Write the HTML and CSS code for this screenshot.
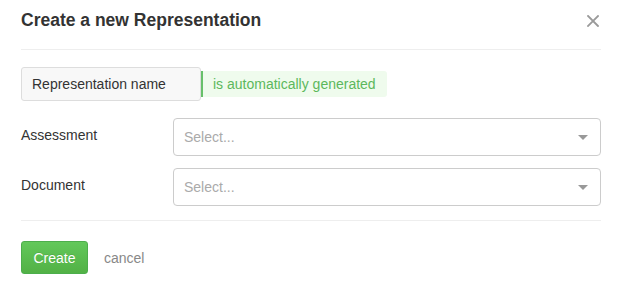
FILE: index.html
```html
<!DOCTYPE html>
<html>
<head>
<meta charset="utf-8">
<link rel="stylesheet" href="styles.css">
</head>
<body>
<div class="modal">
  <div class="modal-header">
    <h3 class="title">Create a new Representation</h3>
    <span class="close"><svg width="12" height="12" viewBox="0 0 12 12"><path d="M1 1 L11 11 M11 1 L1 11" stroke="#9a9a9a" stroke-width="1.8" stroke-linecap="square"/></svg></span>
  </div>
  <div class="modal-body">
    <div class="name-row">
      <div class="name-box">Representation name</div>
      <div class="name-tag">is automatically generated</div>
    </div>
    <div class="field">
      <label class="field-label">Assessment</label>
      <div class="select"><span class="placeholder">Select...</span><span class="arrow"></span></div>
    </div>
    <div class="field field-second">
      <label class="field-label">Document</label>
      <div class="select"><span class="placeholder">Select...</span><span class="arrow"></span></div>
    </div>
  </div>
  <div class="modal-footer">
    <button class="btn-create">Create</button>
    <a class="cancel">cancel</a>
  </div>
</div>
</body>
</html>
```
FILE: styles.css
```css
html, body {
  margin: 0;
  padding: 0;
  background: #fff;
}
body {
  font-family: "Liberation Sans", Arial, sans-serif;
  font-size: 14px;
  color: #333;
}
.modal {
  padding: 0 24px 0 21px;
}
.modal-header {
  height: 49px;
  border-bottom: 1px solid #eeeeee;
  display: flex;
  align-items: flex-start;
  justify-content: space-between;
}
.title {
  margin: 9px 0 0 0;
  font-size: 17.5px;
  line-height: 22px;
  font-weight: bold;
  color: #333;
}
.close {
  margin-top: 15px;
  margin-right: 2px;
  width: 12px;
  height: 12px;
  display: block;
}
.close svg { display: block; }
.modal-body {
  padding-top: 17px;
  padding-bottom: 14px;
  border-bottom: 1px solid #eeeeee;
}
.name-row {
  display: flex;
  align-items: center;
  margin-bottom: 17px;
}
.name-box {
  box-sizing: border-box;
  width: 180px;
  height: 34px;
  border: 1px solid #dddddd;
  border-radius: 3px;
  background: #f8f8f8;
  padding-left: 10px;
  line-height: 32px;
  color: #333;
}
.name-tag {
  box-sizing: border-box;
  height: 26px;
  line-height: 26px;
  background: #effbed;
  border-left: 2px solid #67c06a;
  border-radius: 0 3px 3px 0;
  padding: 0 11px 0 10px;
  color: #5cb85c;
}
.field {
  display: flex;
  align-items: center;
}
.field-second {
  margin-top: 12px;
}
.field-label {
  width: 152px;
  flex-shrink: 0;
  color: #333;
  margin-top: -5px;
}
.select {
  box-sizing: border-box;
  flex: 1;
  height: 38px;
  border: 1px solid #cccccc;
  border-radius: 4px;
  display: flex;
  align-items: center;
  justify-content: space-between;
  padding: 0 12px 0 10px;
  background: #fff;
}
.placeholder {
  color: #aaaaaa;
}
.arrow {
  width: 0;
  height: 0;
  border-left: 5px solid transparent;
  border-right: 5px solid transparent;
  border-top: 5px solid #999999;
}
.modal-footer {
  padding-top: 20px;
  display: flex;
  align-items: center;
}
.btn-create {
  box-sizing: border-box;
  height: 33px;
  width: 67px;
  padding: 0;
  border: 1px solid #4cae4c;
  border-radius: 3px;
  background: linear-gradient(#62c85a, #52b146);
  color: #fff;
  font-family: "Liberation Sans", Arial, sans-serif;
  font-size: 14px;
  text-shadow: 0 -1px 0 rgba(0,0,0,0.1);
}
.cancel {
  margin-left: 16px;
  color: #888;
}
```
